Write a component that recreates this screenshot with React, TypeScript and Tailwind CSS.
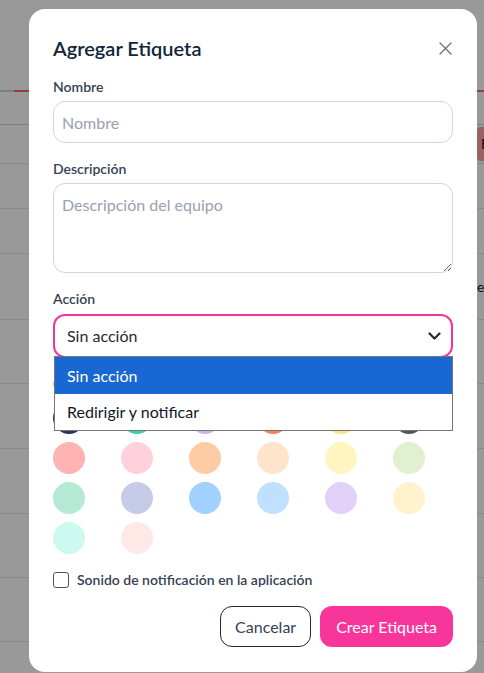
import { useState } from 'react';

const colors = [
  '#27355f', '#3ccfae', '#c8b6f2', '#f3845f', '#fbe38c', '#4b5563',
  '#ffb3b3', '#ffd1dc', '#ffcba4', '#ffe4cc', '#fff5c0', '#e1f0cf',
  '#b4e9d5', '#c6cce8', '#a3d1ff', '#bfe0ff', '#e1d1f8', '#fff2cc',
  '#ccfaf0', '#ffe9e6',
];

const rowLines = ['h-[39px]', 'h-[45px]', 'h-[45px]', 'h-[66px]', 'h-[64px]', 'h-[65px]', 'h-[65px]', 'h-[64px]', 'h-[64px]'];

function BackgroundPage() {
  return (
    <div className="min-h-[673px] bg-white">
      <div className="h-[90px]" />
      <div className="flex h-[2px]">
        <div className="w-[14px] bg-slate-300" />
        <div className="flex-1 bg-red-400" />
      </div>
      <div className="h-[33px] border-b border-gray-300" />
      {rowLines.map((h, i) => (
        <div key={i} className={`${h} flex items-center overflow-hidden whitespace-nowrap border-b border-gray-200 pl-[477px] text-sm text-gray-900`}>
          {i === 0 && <span className="rounded bg-red-300 px-1 py-[7px]">Editar</span>}
          {i === 3 && <span>equipo</span>}
        </div>
      ))}
    </div>
  );
}

export default function App() {
  const [sound, setSound] = useState(false);

  return (
    <div className="relative h-[673px] overflow-hidden font-['Lato',sans-serif]">
      <BackgroundPage />
      <div className="absolute inset-0 bg-black/40">
        <div className="ml-[29px] mt-[9px] w-[448px] rounded-2xl bg-white px-6 pb-[25px] pt-[25px]">
          <div className="flex items-center justify-between">
            <h2 className="text-xl font-semibold leading-7 text-[#12263a]">Agregar Etiqueta</h2>
            <button className="mr-[1px] text-gray-500">
              <svg width="13" height="13" viewBox="0 0 13 13" fill="none" stroke="currentColor" strokeWidth="1.3" strokeLinecap="round">
                <path d="M1 1l11 11M12 1L1 12" />
              </svg>
            </button>
          </div>

          <label className="mt-[15px] mb-1 block text-sm font-semibold text-gray-700">Nombre</label>
          <input
            placeholder="Nombre"
            className="h-[42px] w-full rounded-xl border border-gray-300 px-2 text-base text-gray-800 placeholder:text-gray-400 outline-none"
          />

          <label className="mt-4 mb-1 block text-sm font-semibold text-gray-700">Descripción</label>
          <textarea
            placeholder="Descripción del equipo"
            className="block h-[90px] w-full resize-y rounded-xl border border-gray-300 px-2 py-[9px] text-base text-gray-800 placeholder:text-gray-400 outline-none"
          />

          <label className="mt-4 mb-[5px] block text-sm font-semibold text-gray-700">Acción</label>
          <div className="relative">
            <div className="flex h-[44px] items-center justify-between rounded-xl border-2 border-[#f2359c] pl-3 pr-[10px] text-base text-gray-800">
              <span>Sin acción</span>
              <svg width="13" height="8" viewBox="0 0 13 8" fill="none" stroke="#1e293b" strokeWidth="2.2" strokeLinecap="round" strokeLinejoin="round">
                <path d="M1.5 1.5l5 5 5-5" />
              </svg>
            </div>
            <ul className="absolute left-[1px] right-0 top-[42px] z-10 border border-[#767676] bg-white text-base text-gray-900">
              <li className="flex h-[37px] items-center bg-[#1967d2] pl-3 text-white">Sin acción</li>
              <li className="flex h-[36px] items-center pl-3">Redirigir y notificar</li>
            </ul>
          </div>

          <label className="mt-4 mb-2 block text-sm font-semibold text-gray-700">Color</label>
          <div className="flex flex-wrap gap-x-[36px] gap-y-2">
            {colors.map((c) => (
              <button key={c} className="h-8 w-8 rounded-full" style={{ backgroundColor: c }} />
            ))}
          </div>

          <label className="mt-4 flex items-center gap-2 text-sm font-semibold text-gray-700">
            <span
              onClick={() => setSound(!sound)}
              className={`h-4 w-4 rounded-[3px] border border-gray-600 ${sound ? 'bg-pink-500' : 'bg-white'}`}
            />
            Sonido de notificación en la aplicación
          </label>

          <div className="mt-4 flex justify-end gap-[9px]">
            <button className="h-[41px] rounded-xl border border-gray-800 px-[14px] text-base text-gray-700">Cancelar</button>
            <button className="h-[41px] rounded-xl bg-[#f7359b] px-4 text-base text-white">Crear Etiqueta</button>
          </div>
        </div>
      </div>
    </div>
  );
}
